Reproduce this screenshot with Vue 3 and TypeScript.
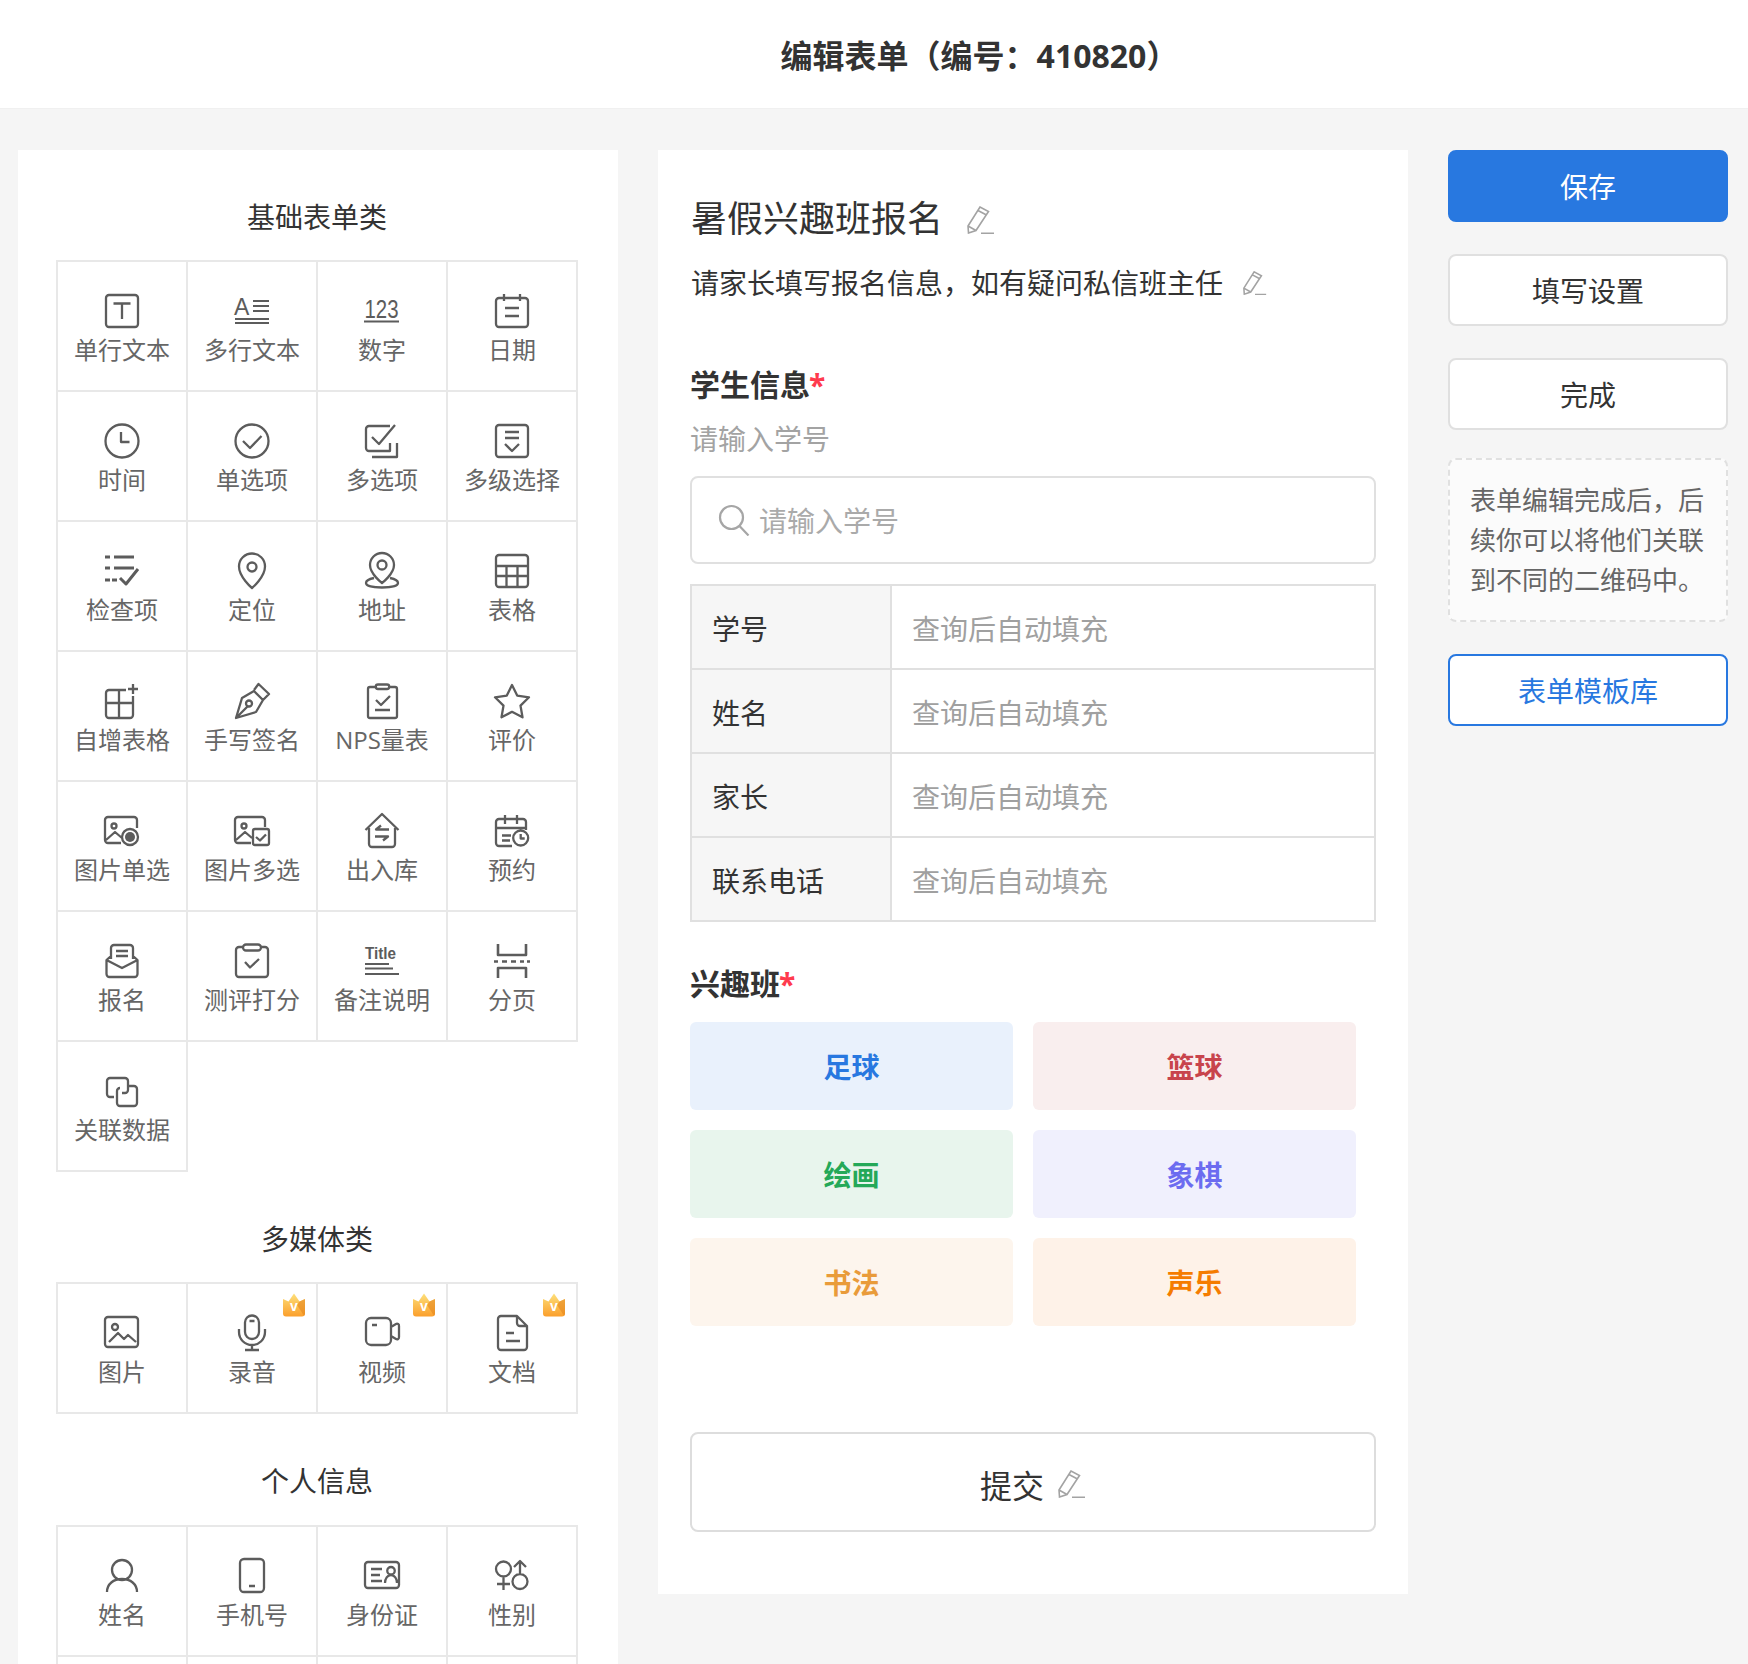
<script setup lang="ts">
interface IconText { x: number; y: number; size: number; text: string; len?: number; weight?: number }
interface Item { label: string; d: string; fill?: string; texts?: IconText[]; vip?: boolean; sw?: number }

const IMG_BOX = 'M35 17V9a3 3 0 0 0-3-3H6a3 3 0 0 0-3 3v20a3 3 0 0 0 3 3h13'
const PEN = 'M1.500 27L1 20 13 1l8.500 4.500L9 24.500z M11 4.500l8.500 4.500 M1 20l8 4.500 M14 27.300h13'

const basic: Item[] = [
  { label: '单行文本', d: 'M7 4h26a3 3 0 0 1 3 3v26a3 3 0 0 1-3 3H7a3 3 0 0 1-3-3V7a3 3 0 0 1 3-3z M11.500 12.500h17 M20 12.500V28' },
  { label: '多行文本', d: 'M21 10h16 M21 15h16 M21 20h16 M3 28h34 M3 32h34', sw: 1.8, texts: [{ x: 2, y: 24, size: 23, text: 'A' }] },
  { label: '数字', d: 'M2 30.500h35', sw: 1.8, texts: [{ x: 2.5, y: 27, size: 25, text: '123', len: 34 }] },
  { label: '日期', d: 'M7 7h26a3 3 0 0 1 3 3v23a3 3 0 0 1-3 3H7a3 3 0 0 1-3-3V10a3 3 0 0 1 3-3z M12 3v7 M28 3v7 M13 17h14 M13 25h14' },
  { label: '时间', d: 'M20 3.500a16.500 16.500 0 1 1 0 33a16.500 16.500 0 1 1 0-33z M19 11v10h8.500' },
  { label: '单选项', d: 'M20 3.500a16.500 16.500 0 1 1 0 33a16.500 16.500 0 1 1 0-33z M11 20l7 7 11.500-12' },
  { label: '多选项', d: 'M28 5H7a3 3 0 0 0-3 3v19a3 3 0 0 0 3 3h21v-8 M10 16l7 7L33 4 M35 22v14H10' },
  { label: '多级选择', d: 'M7 4h26a3 3 0 0 1 3 3v26a3 3 0 0 1-3 3H7a3 3 0 0 1-3-3V7a3 3 0 0 1 3-3z M13 11h14 M13 17h14 M13 23l7 7 7-7' },
  { label: '检查项', d: 'M3 6h5 M12 6h20 M3 17h5 M12 17h20 M3 29h5 M10 29h5 M18 27l6 6 12-15', sw: 3 },
  { label: '定位', d: 'M20 37S7 26 7 15.500a13 13 0 0 1 26 0C33 26 20 37 20 37z M20 11.500a4.500 4.500 0 1 1 0 9a4.500 4.500 0 1 1 0-9z' },
  { label: '地址', d: 'M20 32S8 23 8 14a12 12 0 0 1 24 0c0 9-12 18-12 18z M20 9.500a4.500 4.500 0 1 1 0 9a4.500 4.500 0 1 1 0-9z M12 27c-5 1-8 2.500-8 5 0 3 7 4.500 16 4.500s16-1.500 16-4.500c0-2.500-3-4-8-5' },
  { label: '表格', d: 'M7 4h26a3 3 0 0 1 3 3v26a3 3 0 0 1-3 3H7a3 3 0 0 1-3-3V7a3 3 0 0 1 3-3z M4 15h32 M4 25h32 M14.500 15v21 M25.500 15v21' },
  { label: '自增表格', d: 'M24 9H7a3 3 0 0 0-3 3v22a3 3 0 0 0 3 3h21a3 3 0 0 0 3-3V15 M17 9v28 M4 22h27 M31 3v10 M26 8h10' },
  { label: '手写签名', d: 'M4 37l6-20 12-7 9 9-7 12z M4 37l11-11 M22 9l4.500-6L37 13l-6 6 M17 19.500a3 3 0 1 1 0 6a3 3 0 1 1 0-6z' },
  { label: 'NPS量表', d: 'M14 6H8a2 2 0 0 0-2 2v27a2 2 0 0 0 2 2h25a2 2 0 0 0 2-2V8a2 2 0 0 0-2-2h-6 M16 3.500h9a2 2 0 0 1 0 4.500h-9a2 2 0 0 1 0-4.500z M14 19l5 5 9-9 M13 29h15' },
  { label: '评价', d: 'M20 4l5.200 10.600L37 16.300l-8.500 8.300 2 11.700L20 30.800 9.500 36.300l2-11.700L3 16.300l11.800-1.700z' },
  { label: '图片单选', d: IMG_BOX + ' M12 12.500a2.500 2.500 0 1 1 0 5a2.500 2.500 0 1 1 0-5z M4 29l9-8 7 6 M28 18a8 8 0 1 1 0 16a8 8 0 1 1 0-16z', fill: 'M28 21a5 5 0 1 1 0 10a5 5 0 1 1 0-10z' },
  { label: '图片多选', d: 'M33 16V9a3 3 0 0 0-3-3H6a3 3 0 0 0-3 3v20a3 3 0 0 0 3 3h13 M12 12.500a2.500 2.500 0 1 1 0 5a2.500 2.500 0 1 1 0-5z M4 29l9-8 7 6 M23 18h12a2 2 0 0 1 2 2v12a2 2 0 0 1-2 2H23a2 2 0 0 1-2-2V20a2 2 0 0 1 2-2z M24 26l4 3.500 6-6' },
  { label: '出入库', d: 'M3.500 19L20 3l16.500 16 M7 17v16a3 3 0 0 0 3 3h20a3 3 0 0 0 3-3V17 M27 18.500H14l5-4 M13 25.500h13l-5 4' },
  { label: '预约', d: 'M34 19v-8a3 3 0 0 0-3-3H7a3 3 0 0 0-3 3v21a3 3 0 0 0 3 3h13 M13 4v9 M25 4v9 M4 17h30 M10 24.500h9 M10 29.500h8 M28.700 19.500a7.500 7.500 0 1 1 0 15a7.500 7.500 0 1 1 0-15z M28.700 23v4.500h4' },
  { label: '报名', d: 'M9 18V7a3 3 0 0 1 3-3h16a3 3 0 0 1 3 3v11 M14 10h12 M14 15h12 M9 15l-4.500 4v14a3 3 0 0 0 3 3h25a3 3 0 0 0 3-3V19L31 15 M4.500 19L20 27l15.500-8' },
  { label: '测评打分', d: 'M11 6H7a3 3 0 0 0-3 3v24a3 3 0 0 0 3 3h26a3 3 0 0 0 3-3V9a3 3 0 0 0-3-3h-4 M14 3.500h12a3 3 0 0 1 0 6H14a3 3 0 0 1 0-6z M13 21l5 5.500 9-8.500' },
  { label: '备注说明', d: 'M3 23h24 M3 27.500h28 M3 33h34', sw: 1.8, texts: [{ x: 3, y: 18, size: 16.5, text: 'Title', weight: 700, len: 31 }] },
  { label: '分页', d: 'M6 3v11h28V3 M2 20.500h4 M10 20.500h5 M19 20.500h5 M28 20.500h4 M35 20.500h3 M6 37V27h28v10', sw: 2.6 },
  { label: '关联数据', d: 'M12 26H8a3 3 0 0 1-3-3V10a3 3 0 0 1 3-3h15a3 3 0 0 1 3 3v9a3 3 0 0 1-3 3h-3 M27 15h5a3 3 0 0 1 3 3v14a3 3 0 0 1-3 3H18a3 3 0 0 1-3-3V20a3 3 0 0 1 3-3' },
]

const media: Item[] = [
  { label: '图片', d: 'M6 4h27a3 3 0 0 1 3 3v24a3 3 0 0 1-3 3H6a3 3 0 0 1-3-3V7a3 3 0 0 1 3-3z M13 11a3 3 0 1 1 0 6a3 3 0 1 1 0-6z M7 29l9-9 6 6 4-4 8 7' },
  { label: '录音', d: 'M20 2.500a7 7 0 0 1 7 7V19a7 7 0 0 1-14 0V9.500a7 7 0 0 1 7-7z M7 16v3a13 13 0 0 0 26 0v-3 M20 32v5 M13 37h14 M17.500 8h5', vip: true },
  { label: '视频', d: 'M9 5h15a5 5 0 0 1 5 5v17a5 5 0 0 1-5 5H9a5 5 0 0 1-5-5V10a5 5 0 0 1 5-5z M29 14l5-3a2 2 0 0 1 3 2v11a2 2 0 0 1-3 2l-5-3 M10 12h5', vip: true },
  { label: '文档', d: 'M25 3H9a3 3 0 0 0-3 3v28a3 3 0 0 0 3 3h23a3 3 0 0 0 3-3V13z M25 3v7a3 3 0 0 0 3 3h7 M14 20h8 M14 28h14', vip: true },
]

const personal: Item[] = [
  { label: '姓名', d: 'M20 4a10 10 0 1 1 0 20a10 10 0 1 1 0-20z M5 36c0-8 6.500-13 15-13s15 5 15 13' },
  { label: '手机号', d: 'M12 3h16a4 4 0 0 1 4 4v25a4 4 0 0 1-4 4H12a4 4 0 0 1-4-4V7a4 4 0 0 1 4-4z M17 30h6' },
  { label: '身份证', d: 'M6 6h28a3 3 0 0 1 3 3v20a3 3 0 0 1-3 3H6a3 3 0 0 1-3-3V9a3 3 0 0 1 3-3z M9 13h11 M9 19h9 M9 25h11 M29 11a3.500 3.500 0 1 1 0 7.500a3.500 3.500 0 1 1 0-7.500z M23 27c0-4.500 2.500-8 6-8s6 3.500 6 8' },
  { label: '性别', d: 'M11.500 5.500a7.500 7.500 0 1 1 0 15a7.500 7.500 0 1 1 0-15z M11.500 20.500V34 M5 28h13 M28 18a7.500 7.500 0 1 1 0 15a7.500 7.500 0 1 1 0-15z M28 18V5 M22 11l6-6 6 6' },
  { label: '', d: '' },
  { label: '', d: '' },
  { label: '', d: '' },
  { label: '', d: '' },
]

const groups = [
  { title: '基础表单类', items: basic },
  { title: '多媒体类', items: media },
  { title: '个人信息', items: personal },
]

const rows = ['学号', '姓名', '家长', '联系电话']
const options = [
  { label: '足球', cls: 'blue' },
  { label: '篮球', cls: 'red' },
  { label: '绘画', cls: 'green' },
  { label: '象棋', cls: 'purple' },
  { label: '书法', cls: 'amber' },
  { label: '声乐', cls: 'orange' },
]
</script>

<template>
  <div class="page">
    <header class="top">编辑表单（编号：410820）</header>
    <main class="main">
      <aside class="left">
        <section v-for="(g, gi) in groups" :key="g.title" class="group">
          <h3 class="group-title">{{ g.title }}</h3>
          <div class="grid">
            <div v-for="(it, i) in g.items" :key="i" class="cell">
              <svg v-if="it.d" class="ico" viewBox="0 0 40 40" width="40" height="40">
                <path :d="it.d" fill="none" stroke="#5c5c5c" :stroke-width="it.sw || 2.3" stroke-linejoin="round" stroke-linecap="butt" />
                <path v-if="it.fill" :d="it.fill" fill="#5c5c5c" />
                <text
                  v-for="t in it.texts || []"
                  :key="t.text"
                  :x="t.x"
                  :y="t.y"
                  :font-size="t.size"
                  :font-weight="t.weight || 400"
                  :textLength="t.len"
                  lengthAdjust="spacingAndGlyphs"
                  class="ico-text"
                >{{ t.text }}</text>
              </svg>
              <span class="cell-label">{{ it.label }}</span>
              <svg v-if="it.vip" class="crown" viewBox="0 0 24 24" width="24" height="24">
                <defs>
                  <linearGradient :id="'crown' + gi + i" x1="0" y1="0" x2="0" y2="1">
                    <stop offset="0" stop-color="#fde07a" />
                    <stop offset="1" stop-color="#fb9f2c" />
                  </linearGradient>
                </defs>
                <path d="M1 6l5.500 2.500L12 0.500l5.500 8 5.500-2.500v14.500a3 3 0 0 1-3 3H4a3 3 0 0 1-3-3z" :fill="'url(#crown' + gi + i + ')'" />
                <path d="M23 6v14.500a3 3 0 0 1-1 2.200L15 12l2.500-3.500z" fill="#e5861c" opacity="0.6" />
                <text x="12" y="17.500" text-anchor="middle" font-size="14" font-weight="700" fill="#fff" class="ico-text-plain">v</text>
              </svg>
            </div>
          </div>
        </section>
      </aside>

      <section class="center">
        <div class="form-title">
          <span>暑假兴趣班报名</span>
          <svg class="pen pen-title" viewBox="0 0 28 28" width="28" height="28">
            <path :d="PEN" fill="none" stroke="#a3a3a3" stroke-width="1.600" />
          </svg>
        </div>
        <div class="form-sub">
          <span>请家长填写报名信息，如有疑问私信班主任</span>
          <svg class="pen pen-sub" viewBox="0 0 28 28" width="24" height="24">
            <path :d="PEN" fill="none" stroke="#a3a3a3" stroke-width="1.800" />
          </svg>
        </div>

        <div class="field-title first">学生信息<i>*</i></div>
        <div class="hint">请输入学号</div>
        <div class="search">
          <svg viewBox="0 0 32 32" width="32" height="32" class="search-ico">
            <path d="M13.500 2a11.500 11.500 0 1 1 0 23a11.500 11.500 0 1 1 0-23z M21.500 22l9 9.500" fill="none" stroke="#a6a6a6" stroke-width="2.200" />
          </svg>
          <span>请输入学号</span>
        </div>

        <div class="table">
          <div v-for="r in rows" :key="r" class="row">
            <div class="row-label">{{ r }}</div>
            <div class="row-value">查询后自动填充</div>
          </div>
        </div>

        <div class="field-title second">兴趣班<i>*</i></div>
        <div class="options">
          <div v-for="o in options" :key="o.label" class="option" :class="o.cls">{{ o.label }}</div>
        </div>

        <div class="submit">
          <span>提交</span>
          <svg class="pen pen-submit" viewBox="0 0 28 28" width="28" height="28">
            <path :d="PEN" fill="none" stroke="#a3a3a3" stroke-width="1.600" />
          </svg>
        </div>
      </section>

      <aside class="right">
        <div class="btn primary">保存</div>
        <div class="btn gap32">填写设置</div>
        <div class="btn gap32">完成</div>
        <div class="note">表单编辑完成后，后续你可以将他们关联到不同的二维码中。</div>
        <div class="btn outline">表单模板库</div>
      </aside>
    </main>
  </div>
</template>

<style>
html, body { margin: 0; padding: 0; background: #f5f5f5; }
</style>

<style scoped>
.page {
  width: 1748px;
  height: 1664px;
  overflow: hidden;
  background: #f5f5f5;
  color: #333;
  font-family: "Open Sans", "Noto Sans CJK SC", sans-serif;
}
.top {
  height: 109px;
  box-sizing: border-box;
  border-bottom: 1px solid #f0f0f0;
  background: #fff;
  padding-left: 211px;
  text-align: center;
  font-size: 32px;
  font-weight: 700;
  line-height: 112px;
}
.main {
  display: flex;
  align-items: flex-start;
  padding: 41px 20px 0 18px;
}
.left {
  width: 600px;
  box-sizing: border-box;
  padding: 47px 40px 0 38px;
  background: #fff;
  flex: none;
}
.group + .group { margin-top: 47px; }
.group-title {
  margin: 0 0 23px;
  font-size: 28px;
  font-weight: 400;
  line-height: 40px;
  text-align: center;
}
.group:last-child .group-title { margin-bottom: 24px; }
.grid {
  display: grid;
  grid-template-columns: repeat(4, 130px);
  grid-auto-rows: 130px;
  padding: 0 2px 2px 0;
}
.cell {
  position: relative;
  width: 132px;
  height: 132px;
  box-sizing: border-box;
  border: 2px solid #e8e8e8;
  padding-top: 29px;
  display: flex;
  flex-direction: column;
  align-items: center;
}
.ico { display: block; flex: none; overflow: visible; }
.ico-text { font-family: "Liberation Sans", sans-serif; fill: #5c5c5c; }
.ico-text-plain { font-family: "Liberation Sans", sans-serif; }
.cell-label {
  margin-top: 1px;
  font-size: 24px;
  line-height: 36px;
  color: #666;
  white-space: nowrap;
}
.crown { position: absolute; top: 9px; right: 10px; }

.center {
  width: 750px;
  box-sizing: border-box;
  margin-left: 40px;
  padding: 44px 32px 62px;
  background: #fff;
  flex: none;
}
.form-title {
  display: flex;
  align-items: center;
  height: 50px;
  font-size: 36px;
  line-height: 50px;
  padding-left: 1px;
}
.pen-title { margin: 2px 0 0 24px; }
.form-sub {
  display: flex;
  align-items: center;
  height: 40px;
  margin-top: 19px;
  font-size: 28px;
  line-height: 40px;
  padding-left: 1px;
}
.pen-sub { margin: 0 0 0 20px; }
.field-title {
  font-size: 30px;
  font-weight: 700;
  line-height: 40px;
}
.field-title i {
  font-style: normal;
  font-weight: 700;
  color: #ff3b4e;
  margin-left: -1px;
}
.first { margin-top: 62px; }
.second { margin-top: 42px; }
.hint {
  margin-top: 14px;
  font-size: 28px;
  line-height: 40px;
  color: #a3a3a3;
}
.search {
  margin-top: 17px;
  width: 686px;
  height: 88px;
  box-sizing: border-box;
  border: 2px solid #e0e0e0;
  border-radius: 8px;
  display: flex;
  align-items: center;
  padding-left: 26px;
  font-size: 28px;
  color: #aaa;
}
.search-ico { margin-right: 9px; }
.table {
  margin-top: 20px;
  width: 686px;
  box-sizing: border-box;
  border: 2px solid #e0e0e0;
}
.row {
  display: flex;
  height: 82px;
  font-size: 28px;
  line-height: 86px;
}
.row + .row {
  height: 84px;
  border-top: 2px solid #e0e0e0;
  box-sizing: border-box;
}
.row-label {
  box-sizing: border-box;
  padding-left: 20px;
  background: #f6f6f6;
  border-right: 2px solid #e0e0e0;
  flex: none;
  width: 200px;
}
.row-value {
  padding-left: 20px;
  color: #a0a0a0;
}
.options {
  margin-top: 18px;
  display: grid;
  grid-template-columns: repeat(2, 323px);
  grid-auto-rows: 88px;
  gap: 20px;
}
.option {
  border-radius: 6px;
  font-size: 28px;
  font-weight: 700;
  line-height: 90px;
  text-align: center;
}
.blue { background: #e9f1fc; color: #2878e0; }
.red { background: #f9eeee; color: #c8444c; }
.green { background: #e8f5ed; color: #24a858; }
.purple { background: #f0f0fd; color: #6c6cf0; }
.amber { background: #fdf5ed; color: #e99b3a; }
.orange { background: #fef2e8; color: #f57c00; }
.submit {
  margin-top: 106px;
  width: 686px;
  height: 100px;
  box-sizing: border-box;
  border: 2px solid #ddd;
  border-radius: 8px;
  padding-top: 3px;
  display: flex;
  align-items: center;
  justify-content: center;
  font-size: 32px;
}
.pen-submit { margin-left: 14px; }

.right {
  width: 280px;
  margin-left: 40px;
  flex: none;
}
.btn {
  height: 72px;
  box-sizing: border-box;
  border: 2px solid #e0e0e0;
  border-radius: 8px;
  background: #fff;
  font-size: 28px;
  line-height: 70px;
  text-align: center;
}
.primary {
  background: #2878e0;
  border-color: #2878e0;
  color: #fff;
}
.gap32 { margin-top: 32px; }
.outline {
  margin-top: 32px;
  border-color: #2878e0;
  color: #2878e0;
}
.note {
  margin-top: 28px;
  box-sizing: border-box;
  height: 164px;
  padding: 20px;
  border: 2px dashed #e0e0e0;
  border-radius: 8px;
  background: #fbfbfb;
  font-size: 26px;
  line-height: 40px;
  color: #666;
}
</style>
